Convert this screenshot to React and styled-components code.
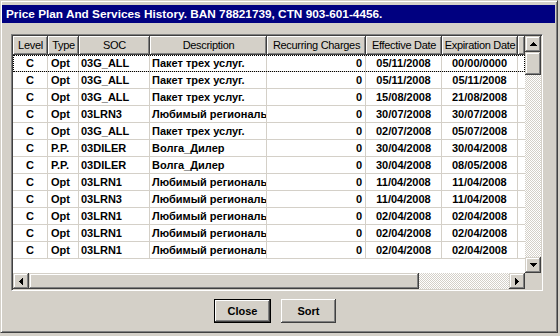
import React from "react";
import styled, { createGlobalStyle, css } from "styled-components";

const GlobalStyle = createGlobalStyle`
  html, body {
    margin: 0;
    padding: 0;
    width: 560px;
    height: 336px;
    overflow: hidden;
    background: #d4d0c8;
  }
`;

const Window = styled.div`
  width: 558px;
  height: 333px;
  box-sizing: border-box;
  border-style: solid;
  border-width: 1px;
  border-color: #d4d0c8 #404040 #404040 #d4d0c8;
  box-shadow: inset 1px 1px #fff, inset -1px -1px #808080;
  padding: 4px 2px 2px 1px;
  display: flex;
  flex-direction: column;
  background: #d4d0c8;
  font-family: "Liberation Sans", Arial, sans-serif;
  font-size: 11px;
  color: #000;
`;

const TitleBar = styled.div`
  height: 18px;
  background: #000080;
  color: #fff;
  font-weight: bold;
  font-size: 11.8px;
  line-height: 18px;
  padding-left: 4px;
  white-space: nowrap;
`;

const Body = styled.div`
  flex: 1;
  display: flex;
  flex-direction: column;
  padding: 11px 12px 0 9px;
`;

const Frame = styled.div`
  height: 257px;
  box-sizing: border-box;
  border: 1px solid;
  border-color: #808080 #fff #fff #808080;
  box-shadow: inset 1px 1px #404040, inset -1px -1px #d4d0c8;
  padding: 1px;
  display: grid;
  grid-template-columns: 1fr 16px;
  grid-template-rows: 1fr 16px;
`;

const TableArea = styled.div`
  background: #fff;
  overflow: hidden;
  display: flex;
  flex-direction: column;
`;

const HeaderRow = styled.div`
  display: flex;
  height: 19px;
  flex: none;
`;

const bevel = css`
  background: #d4d0c8;
  box-shadow: inset -1px -1px #404040, inset 1px 1px #d4d0c8,
    inset -2px -2px #808080, inset 2px 2px #fff;
`;

const HeaderCell = styled.div`
  box-sizing: border-box;
  width: ${(p) => (p.$w ? `${p.$w}px` : "auto")};
  flex: ${(p) => (p.$w ? "none" : "1")};
  background: #d4d0c8;
  box-shadow: inset -1px -1px #404040, inset 1px 1px #fff,
    inset -2px -2px #808080;
  text-align: center;
  line-height: 18px;
  letter-spacing: -0.3px;
  white-space: nowrap;
  overflow: hidden;
`;

const Row = styled.div`
  display: flex;
  height: 17px;
  box-sizing: border-box;
  border-bottom: 1px solid #d4d0c8;
  flex: none;
  ${(p) =>
    p.$focus &&
    css`
      outline: 1px dotted #000;
      outline-offset: -1px;
    `}
`;

const Cell = styled.div`
  box-sizing: border-box;
  width: ${(p) => p.$w}px;
  flex: none;
  border-right: 1px solid #d4d0c8;
  font-weight: bold;
  line-height: 17px;
  padding: 0 ${(p) => p.$pad}px;
  text-align: ${(p) => p.$align};
  white-space: nowrap;
  overflow: hidden;
`;

const VScroll = styled.div`
  display: flex;
  flex-direction: column;
`;

const HScroll = styled.div`
  display: flex;
`;

const Track = styled.div`
  flex: 1;
  background-image: repeating-conic-gradient(#fff 0% 25%, #d4d0c8 0% 50%);
  background-size: 2px 2px;
`;

const Thumb = styled.div`
  ${bevel};
  flex: none;
  width: ${(p) => (p.$w ? `${p.$w}px` : "16px")};
  height: ${(p) => (p.$h ? `${p.$h}px` : "16px")};
`;

const ArrowBtn = styled.div`
  ${bevel};
  flex: none;
  width: 16px;
  height: 16px;
  display: flex;
  align-items: center;
  justify-content: center;
`;

const Corner = styled.div`
  background: #d4d0c8;
`;

const ButtonRow = styled.div`
  display: flex;
  justify-content: center;
  gap: 10px;
  margin-top: 8px;
  padding-right: 4px;
`;

const Button = styled.button`
  box-sizing: border-box;
  width: ${(p) => p.$w}px;
  height: 24px;
  padding: 0;
  font-family: "Liberation Sans", Arial, sans-serif;
  font-size: 11px;
  font-weight: bold;
  color: #000;
  background: #d4d0c8;
  border: ${(p) => (p.$default ? "1px solid #000" : "none")};
  box-shadow: inset -1px -1px #404040, inset 1px 1px #fff,
    inset -2px -2px #808080;
  cursor: default;
`;

function Arrow({ dir }) {
  const rects = [];
  for (let i = 0; i < 4; i++) {
    const len = 1 + i * 2;
    if (dir === "up") rects.push(<rect key={i} x={3 - i} y={i} width={len} height={1} />);
    if (dir === "down") rects.push(<rect key={i} x={3 - i} y={3 - i} width={len} height={1} />);
    if (dir === "left") rects.push(<rect key={i} x={i} y={3 - i} width={1} height={len} />);
    if (dir === "right") rects.push(<rect key={i} x={3 - i} y={3 - i} width={1} height={len} />);
  }
  const vertical = dir === "up" || dir === "down";
  return (
    <svg
      width={vertical ? 7 : 4}
      height={vertical ? 4 : 7}
      viewBox={vertical ? "0 0 7 4" : "0 0 4 7"}
      shapeRendering="crispEdges"
      fill="#000"
    >
      {rects}
    </svg>
  );
}

const columns = [
  { title: "Level", w: 35, align: "center", pad: 2 },
  { title: "Type", w: 31, align: "left", pad: 3 },
  { title: "SOC", w: 71, align: "left", pad: 2 },
  { title: "Description", w: 117, align: "left", pad: 2 },
  { title: "Recurring Charges", w: 99, align: "right", pad: 3 },
  { title: "Effective Date", w: 76, align: "center", pad: 2 },
  { title: "Expiration Date", w: 76, align: "center", pad: 2 },
];

const PKT = "Пакет трех услуг.";
const LRN = "Любимый региональный";
const DIL = "Волга_Дилер";

const rows = [
  ["C", "Opt", "03G_ALL", PKT, "0", "05/11/2008", "00/00/0000"],
  ["C", "Opt", "03G_ALL", PKT, "0", "05/11/2008", "05/11/2008"],
  ["C", "Opt", "03G_ALL", PKT, "0", "15/08/2008", "21/08/2008"],
  ["C", "Opt", "03LRN3", LRN, "0", "30/07/2008", "30/07/2008"],
  ["C", "Opt", "03G_ALL", PKT, "0", "02/07/2008", "05/07/2008"],
  ["C", "P.P.", "03DILER", DIL, "0", "30/04/2008", "30/04/2008"],
  ["C", "P.P.", "03DILER", DIL, "0", "30/04/2008", "08/05/2008"],
  ["C", "Opt", "03LRN1", LRN, "0", "11/04/2008", "11/04/2008"],
  ["C", "Opt", "03LRN3", LRN, "0", "11/04/2008", "11/04/2008"],
  ["C", "Opt", "03LRN1", LRN, "0", "02/04/2008", "02/04/2008"],
  ["C", "Opt", "03LRN1", LRN, "0", "02/04/2008", "02/04/2008"],
  ["C", "Opt", "03LRN1", LRN, "0", "02/04/2008", "02/04/2008"],
];

export default function App() {
  return (
    <>
      <GlobalStyle />
      <Window>
        <TitleBar>Price Plan And Services History. BAN 78821739, CTN 903-601-4456.</TitleBar>
        <Body>
          <Frame>
            <TableArea>
              <HeaderRow>
                {columns.map((c) => (
                  <HeaderCell key={c.title} $w={c.w}>
                    {c.title}
                  </HeaderCell>
                ))}
                <HeaderCell />
              </HeaderRow>
              {rows.map((r, i) => (
                <Row key={i} $focus={i === 0}>
                  {r.map((v, j) => (
                    <Cell key={j} $w={columns[j].w} $align={columns[j].align} $pad={columns[j].pad}>
                      {v}
                    </Cell>
                  ))}
                </Row>
              ))}
            </TableArea>
            <VScroll>
              <ArrowBtn>
                <Arrow dir="up" />
              </ArrowBtn>
              <Thumb $h={23} />
              <Track />
              <ArrowBtn>
                <Arrow dir="down" />
              </ArrowBtn>
            </VScroll>
            <HScroll>
              <ArrowBtn>
                <Arrow dir="left" />
              </ArrowBtn>
              <Thumb $w={390} />
              <Track />
              <ArrowBtn>
                <Arrow dir="right" />
              </ArrowBtn>
            </HScroll>
            <Corner />
          </Frame>
          <ButtonRow>
            <Button $w={57} $default>
              Close
            </Button>
            <Button $w={55}>Sort</Button>
          </ButtonRow>
        </Body>
      </Window>
    </>
  );
}
